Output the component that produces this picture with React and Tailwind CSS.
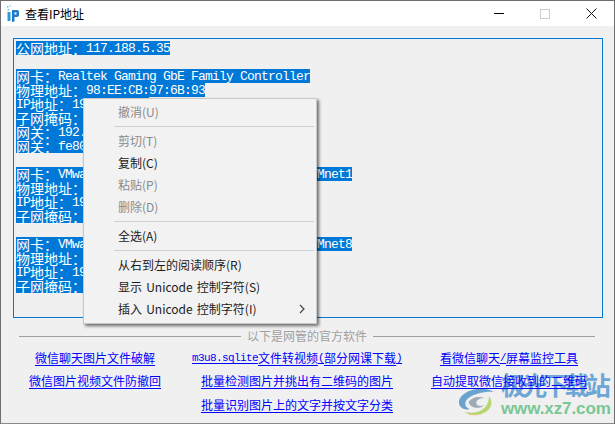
import React from "react";

const CJK = '"Noto Sans CJK SC", "Noto Sans", sans-serif';

function Mixed({ text, latin, cjk }) {
  const parts = text.split(/([\x20-\x7e]+)/).filter(Boolean);
  return (
    <>
      {parts.map((p, i) =>
        /^[\x20-\x7e]+$/.test(p) ? (
          <span key={i} className={latin}>{p}</span>
        ) : (
          <span key={i} className={cjk}>{p}</span>
        )
      )}
    </>
  );
}

function SelLine({ text }) {
  if (!text) return <div className="h-[14px]" />;
  return (
    <div className="h-[14px] w-fit flex items-center bg-[#0078d7] text-white whitespace-pre">
      <Mixed
        text={text}
        latin="font-['Liberation_Mono'] text-[13px] leading-[14px] tracking-[-0.8px] mt-[2px]"
        cjk="font-['Noto_Sans_CJK_SC'] text-[14px] leading-[14px]"
      />
    </div>
  );
}

const lines = [
  "公网地址：117.188.5.35",
  "",
  "网卡：Realtek Gaming GbE Family Controller",
  "物理地址：98:EE:CB:97:6B:93",
  "IP地址：192.168.1.5",
  "子网掩码：255.255.255.0",
  "网关：192.168.1.1",
  "网关：fe80::1",
  "",
  "网卡：VMware Virtual Ethernet Adapter for VMnet1",
  "物理地址：00:50:56:C0:00:01",
  "IP地址：192.168.85.1",
  "子网掩码：255.255.255.0",
  "",
  "网卡：VMware Virtual Ethernet Adapter for VMnet8",
  "物理地址：00:50:56:C0:00:08",
  "IP地址：192.168.17.1",
  "子网掩码：255.255.255.0",
];

function MenuItem({ label, disabled, arrow }) {
  return (
    <div
      className={`h-[22px] flex items-center justify-between pl-[34px] pr-[10px] text-[12px] leading-[22px] whitespace-pre [word-spacing:1.5px] ${
        disabled ? "text-[#8a8a8a]" : "text-[#1a1a1a]"
      }`}
    >
      <span>{label}</span>
      {arrow && (
        <svg width="6" height="10" viewBox="0 0 6 10" className="mr-[1px]">
          <path d="M1 1l4 4-4 4" fill="none" stroke="#444" strokeWidth="1.2" />
        </svg>
      )}
    </div>
  );
}

function Sep() {
  return (
    <div className="h-[7px] flex items-center pl-[30px] pr-[2px]">
      <div className="h-px w-full bg-[#d0d0d0]" />
    </div>
  );
}

function LinkText({ text }) {
  return (
    <span className="flex items-center h-[16px] text-[#0000ff] underline decoration-[#0000ff] [text-decoration-skip-ink:none] underline-offset-2 whitespace-pre text-[12px]">
      <Mixed
        text={text}
        latin="font-['Liberation_Mono'] text-[11px] leading-[16px] tracking-[-0.6px]"
        cjk="font-['Noto_Sans_CJK_SC'] leading-[16px]"
      />
    </span>
  );
}

function AppIcon() {
  return (
    <svg width="12" height="17" viewBox="0 0 12 17" className="shrink-0">
      <rect x="0" y="1" width="1.5" height="1.5" fill="#6cc0ea" />
      <rect x="2.5" y="0" width="1.5" height="1.5" fill="#9ad6f2" />
      <rect x="0.5" y="4" width="1.5" height="1.5" fill="#6cc0ea" />
      <rect x="0.5" y="7" width="3" height="9" fill="#2a9be0" />
      <path d="M5 5h5a2 2 0 0 1 2 2v3a2 2 0 0 1-2 2H7.5v4.5L5 17z" fill="#1f7ac8" />
      <rect x="7.5" y="7.5" width="2" height="2" fill="#ffffff" />
    </svg>
  );
}

function Watermark() {
  return (
    <div className="absolute left-[456px] top-[369px] w-[156px] h-[52px] pointer-events-none">
      <svg width="42" height="31" viewBox="0 0 50 42" preserveAspectRatio="none" className="absolute left-0 top-[16px] opacity-80">
        <path d="M44 8C30 -1 8 5 3 18c-3 9 4 16 12 13-6-2-7-9-2-14C20 10 34 7 44 8z" fill="#4a90c8" />
        <path d="M14 22c2-6 12-9 19-6-5 0-10 3-10 7 0 4 5 5 9 3-5 6-17 4-18-4z" fill="#8a9aa8" />
        <path d="M38 14c6 8 3 20-9 24-8 2-15 1-20-3 10 3 20 0 25-7 3-4 4-9 4-14z" fill="#a8d050" />
        <path d="M9 35c6 4 15 5 21 2-6 4-15 4-21-2z" fill="#e0b040" />
      </svg>
      <div className="absolute left-[44px] top-[0px] text-[25px] leading-[28px] tracking-[-3.8px] font-bold text-[#6ea6d5] font-['Noto_Sans_CJK_SC'] whitespace-pre">
        极光下载站
      </div>
      <div className="absolute left-[44px] top-[30px] text-[17px] leading-[18px] font-['Liberation_Sans'] font-bold text-[#78c795] tracking-[-0.1px] whitespace-pre">
        www.xz7.com
      </div>
    </div>
  );
}

export default function App() {
  return (
    <div
      className="relative w-[615px] h-[424px] overflow-hidden bg-[#f0f0f0] border border-[#6f6f6f] border-b-[#8a8a8a] flex flex-col"
      style={{ fontFamily: CJK }}
    >
      {/* title bar */}
      <div className="h-[25px] bg-white flex items-center shrink-0">
        <div className="ml-[6px] mr-[6px] flex items-center">
          <AppIcon />
        </div>
        <span className="text-[12px] text-black font-['Noto_Sans_CJK_SC'] leading-[25px] -mt-[1px]">查看IP地址</span>
        <div className="ml-auto flex items-center h-full">
          <div className="w-[46px] flex justify-center">
            <div className="w-[10px] h-px bg-black" />
          </div>
          <div className="w-[46px] flex justify-center">
            <div className="w-[10px] h-[10px] border border-[#cccccc]" />
          </div>
          <div className="w-[46px] flex justify-center">
            <svg width="11" height="11" viewBox="0 0 11 11">
              <path d="M.5.5l10 10M10.5.5l-10 10" stroke="#111" strokeWidth="1" fill="none" />
            </svg>
          </div>
        </div>
      </div>

      {/* text box */}
      <div className="ml-[12px] mt-[12px] w-[590px] h-[280px] border border-[#0078d7] pl-[2px] pt-[2px] shrink-0">
        {lines.map((t, i) => (
          <SelLine key={i} text={t} />
        ))}
      </div>

      {/* group divider */}
      <div className="mt-[10px] ml-[18px] w-[576px] h-[16px] flex items-center gap-[6px] shrink-0">
        <div className="h-px flex-1 bg-[#a0a0a0]" />
        <span className="text-[12px] leading-[16px] text-[#a0a0a0] whitespace-pre">以下是网管的官方软件</span>
        <div className="h-px flex-1 bg-[#a0a0a0]" />
      </div>

      <Watermark />

      {/* links */}
      <div className="relative mt-[2px] ml-[18px] grid grid-cols-[152px_252px_172px] auto-rows-[23.5px] justify-items-center items-center">
        <LinkText text="微信聊天图片文件破解" />
        <LinkText text="m3u8.sqlite文件转视频(部分网课下载)" />
        <LinkText text="看微信聊天/屏幕监控工具" />
        <LinkText text="微信图片视频文件防撤回" />
        <LinkText text="批量检测图片并挑出有二维码的图片" />
        <LinkText text="自动提取微信接收到的二维码" />
        <span />
        <LinkText text="批量识别图片上的文字并按文字分类" />
      </div>

      {/* context menu */}
      <div className="absolute left-[82px] top-[97px] w-[234px] h-[226px] bg-[#f2f2f2] border border-[#c8c8c8] pt-[2px] shadow-[2px_2px_3px_rgba(0,0,0,0.55)]">
        <MenuItem label="撤消(U)" disabled />
        <Sep />
        <MenuItem label="剪切(T)" disabled />
        <MenuItem label="复制(C)" />
        <MenuItem label="粘贴(P)" disabled />
        <MenuItem label="删除(D)" disabled />
        <Sep />
        <MenuItem label="全选(A)" />
        <Sep />
        <MenuItem label="从右到左的阅读顺序(R)" />
        <MenuItem label="显示 Unicode 控制字符(S)" />
        <MenuItem label="插入 Unicode 控制字符(I)" arrow />
      </div>
    </div>
  );
}
